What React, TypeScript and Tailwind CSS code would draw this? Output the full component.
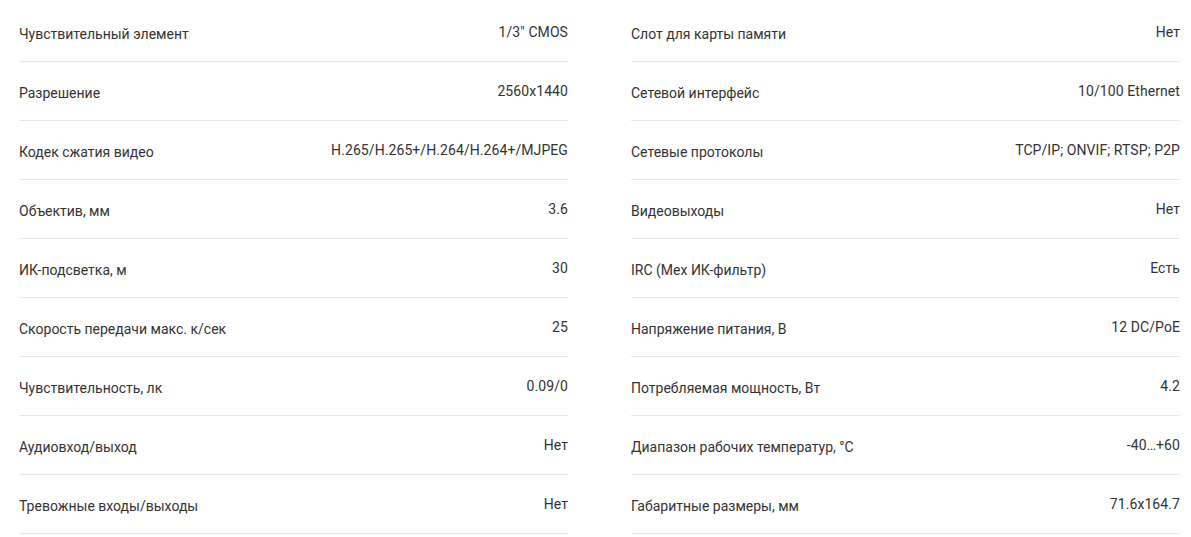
const LEFT: [string, string][] = [
  ["Чувствительный элемент", "1/3\" CMOS"],
  ["Разрешение", "2560x1440"],
  ["Кодек сжатия видео", "H.265/H.265+/H.264/H.264+/MJPEG"],
  ["Объектив, мм", "3.6"],
  ["ИК-подсветка, м", "30"],
  ["Скорость передачи макс. к/сек", "25"],
  ["Чувствительность, лк", "0.09/0"],
  ["Аудиовход/выход", "Нет"],
  ["Тревожные входы/выходы", "Нет"],
];

const RIGHT: [string, string][] = [
  ["Слот для карты памяти", "Нет"],
  ["Сетевой интерфейс", "10/100 Ethernet"],
  ["Сетевые протоколы", "TCP/IP; ONVIF; RTSP; P2P"],
  ["Видеовыходы", "Нет"],
  ["IRC (Мех ИК-фильтр)", "Есть"],
  ["Напряжение питания, В", "12 DC/PoE"],
  ["Потребляемая мощность, Вт", "4.2"],
  ["Диапазон рабочих температур, °С", "-40…+60"],
  ["Габаритные размеры, мм", "71.6x164.7"],
];

function SpecRow({ label, value }: { label: string; value: string }) {
  return (
    <div className="flex justify-between h-[59px] border-b border-[#e8e8e8]">
      <span className="pt-[21px] leading-5">{label}</span>
      <span className="pt-[19px] leading-5 text-right tracking-[0.08px]">{value}</span>
    </div>
  );
}

export default function App() {
  return (
    <div
      className="bg-white w-[1191px] h-[537px] pl-[19px] pt-[3px] text-[14px] text-[#333333]"
      style={{ fontFamily: "Roboto, 'Noto Sans', sans-serif" }}
    >
      <div className="flex gap-[63px]">
        <div className="w-[549px]">
          {LEFT.map(([l, v]) => (
            <SpecRow key={l} label={l} value={v} />
          ))}
        </div>
        <div className="w-[549px]">
          {RIGHT.map(([l, v]) => (
            <SpecRow key={l} label={l} value={v} />
          ))}
        </div>
      </div>
    </div>
  );
}
